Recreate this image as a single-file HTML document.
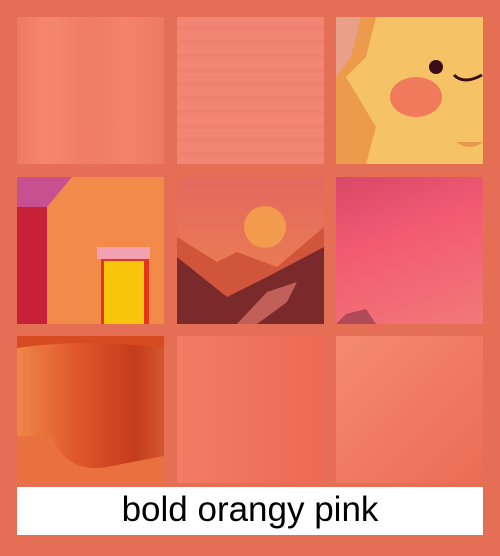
<!DOCTYPE html>
<html><head><style>
body{margin:0;width:500px;height:556px;background:#E46F54;position:relative;overflow:hidden;font-family:"Liberation Sans",sans-serif}
.t{position:absolute;width:147px;height:147px;overflow:hidden}
.cap{position:absolute;left:17px;top:487px;width:466px;height:48px;background:#fff;text-align:center;font-size:35px;line-height:46px;color:#000}
</style></head><body>
<div class="t" style="left:17px;top:17px;background:linear-gradient(90deg,#ee7a62,#f5866c 20%,#ef7c63 50%,#f3836a 75%,#ec7a60)"></div>
<div class="t" style="left:177px;top:17px;background:repeating-linear-gradient(180deg,#f28574 0 9px,#f08070 9px 14px)"></div>
<div class="t" style="left:336px;top:17px;background:#f5c365">
<svg width="147" height="147"><path d="M0 0H40L30 40L10 60L40 110L30 147H0Z" fill="#ec9a4c"/><path d="M0 0H25L15 40L0 60Z" fill="#e8a08a"/><circle cx="100" cy="50" r="7" fill="#3a0c18"/><path d="M118 58q10 10 28 0" stroke="#3a0c18" stroke-width="3" fill="none"/><ellipse cx="80" cy="80" rx="26" ry="20" fill="#f07a5c"/><path d="M120 125q14 10 27 0" fill="#e89a4c"/></svg></div>
<div class="t" style="left:17px;top:177px;background:#f28a4a">
<svg width="147" height="147"><path d="M0 0H55L30 30H0Z" fill="#c95090"/><rect x="0" y="30" width="30" height="117" fill="#c9203a"/><rect x="80" y="70" width="53" height="12" fill="#f2a0b0"/><rect x="84" y="82" width="48" height="65" fill="#e7341e"/><rect x="87" y="84" width="40" height="63" fill="#f7c60a"/></svg></div>
<div class="t" style="left:177px;top:177px;background:linear-gradient(180deg,#e4685e,#e97a55 60%,#7e2a2a)">
<svg width="147" height="147"><circle cx="88" cy="50" r="21" fill="#f29a4e"/><path d="M0 60L40 85L60 75L100 90L147 50V147H0Z" fill="#d0553a"/><path d="M0 80L50 120L90 100L147 70V147H0Z" fill="#7a2a2a"/><path d="M60 147L90 115L120 105L110 125L80 147Z" fill="#c06058"/></svg></div>
<div class="t" style="left:336px;top:177px;background:linear-gradient(160deg,#d84868,#f25a72 40%,#f27878)"><svg width="147" height="147"><path d="M0 147L10 137L30 132L40 147Z" fill="#b04a58"/></svg></div>
<div class="t" style="left:17px;top:336px;background:linear-gradient(90deg,#f08548,#e0582a 40%,#c43c1c 80%,#d4582c)"><svg width="147" height="147"><path d="M0 0H147V12Q70 2 0 12Z" fill="#d84a20"/><path d="M0 100H35Q50 140 95 130L147 120V147H0Z" fill="#ea7040"/></svg></div>
<div class="t" style="left:177px;top:336px;background:linear-gradient(90deg,#f47c64,#ec6a52)"></div>
<div class="t" style="left:336px;top:336px;background:linear-gradient(135deg,#f48a6c,#ec6c54)"></div>
<div class="cap">bold orangy pink</div>
</body></html>
